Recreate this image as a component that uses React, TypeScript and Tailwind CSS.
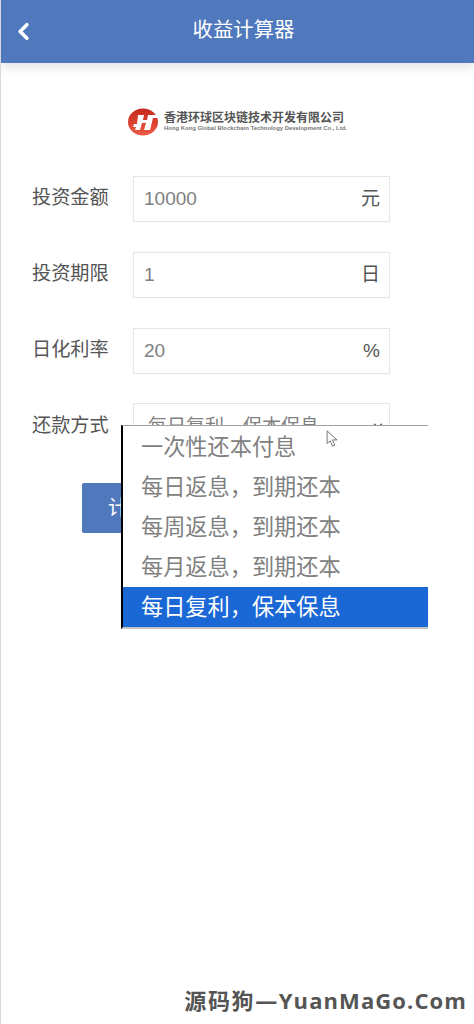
import React from 'react';
import { ChevronDown, ChevronLeft } from 'lucide-react';

const FONT = 'font-["Liberation_Sans","Noto_Sans_CJK_SC",sans-serif]';

const options = ['一次性还本付息', '每日返息，到期还本', '每周返息，到期还本', '每月返息，到期还本', '每日复利，保本保息'];

const Field = ({ label, value, unit }: { label: string; value: string; unit: string }) => (
  <div className="flex h-[46px] items-center">
    <label className="w-[101px] shrink-0 pb-[2px] text-[19.2px] leading-none text-[#555]">{label}</label>
    <div className="flex h-full w-[257px] items-center justify-between border border-[#e6e6e6] pb-[2px] pl-[10px] pr-[9px] shadow-[0_0_1px_#eee]">
      <span className="text-[19px] leading-none text-[#808080]">{value}</span>
      <span className="text-[19px] leading-none text-[#555]">{unit}</span>
    </div>
  </div>
);

const Logo = () => (
  <div className="flex h-[28px] items-center gap-[5px]">
    <svg width="31" height="28" viewBox="0 0 31 28">
      <defs>
        <linearGradient id="logoRed" x1="0" y1="0" x2="0" y2="1">
          <stop offset="0" stopColor="#c5281c" />
          <stop offset="1" stopColor="#ee5a45" />
        </linearGradient>
      </defs>
      <ellipse cx="15" cy="14" rx="15" ry="13.5" fill="url(#logoRed)" />
      <path d="M10 7h6l-1 5h4l1-5h11l-1 3h-5l-3 12h-6l2-7h-4l-2 7H7l1-3H5l1-3h3z" fill="#fff" />
    </svg>
    <div className="flex flex-col items-start">
      <span className="text-[12px] font-bold leading-[13px] whitespace-nowrap text-[#555]">香港环球区块链技术开发有限公司</span>
      <span className="text-[5.9px] font-bold leading-[7px] whitespace-nowrap text-[#777]">Hong Kong Global Blockchain Technology Development Co., Ltd.</span>
    </div>
  </div>
);

export default function App() {
  return (
    <div className={`${FONT} flex h-[1024px] flex-col overflow-hidden border-l border-[#d9d9d9] bg-white`}>
      <header className="relative flex h-[63px] shrink-0 items-center justify-center bg-[#4f78bd] pb-[2px] pl-[12px] shadow-[0_4px_12px_rgba(0,0,0,0.12)]">
        <ChevronLeft className="absolute left-[9px] top-[18px] h-[27px] w-[27px] text-white" strokeWidth={3.2} />
        <h1 className="text-[20.4px] font-normal text-white">收益计算器</h1>
      </header>

      <div className="mt-[45px] flex justify-center">
        <Logo />
      </div>

      <div className="mt-[40px] flex flex-col gap-[30px] pl-[31px]">
        <Field label="投资金额" value="10000" unit="元" />
        <Field label="投资期限" value="1" unit="日" />
        <Field label="日化利率" value="20" unit="%" />
      </div>

      <div className="relative mt-[29px] pl-[31px]">
        <div className="flex h-[46px] items-center">
          <label className="w-[101px] shrink-0 pb-[1px] text-[19.2px] leading-none text-[#555]">还款方式</label>
          <div className="flex h-full w-[257px] items-center justify-between border border-[#e6e6e6] pl-[14px] pr-[4px]">
            <span className="text-[19px] leading-none text-[#808080]">每日复利，保本保息</span>
            <ChevronDown className="h-[14px] w-[14px] text-[#555]" strokeWidth={2.5} />
          </div>
        </div>

        <button className="ml-[50px] mt-[34px] block h-[50px] w-[310px] rounded-[2px] bg-[#4f78bd] pl-[26px] text-left text-[20px] text-white">
          计算
        </button>

        {/* native select popup sits over the field and the button */}
        <ul className="absolute left-[120px] top-[22px] w-[307px] border-t border-b-2 border-l-2 border-t-[#a0a0a0] border-b-[#c4c4c4] border-l-black bg-white">
          {options.map((opt, i) => (
            <li
              key={opt}
              className={
                i === options.length - 1
                  ? 'flex h-[40px] items-center bg-[#1a67d6] pt-[2px] pl-[18px] text-[22.2px] leading-none text-white'
                  : 'flex h-[40.25px] items-center pt-[3px] pl-[18px] text-[22.2px] leading-none text-[#808080]'
              }
            >
              {opt}
            </li>
          ))}
        </ul>

        <svg className="absolute left-[325px] top-[27px]" width="13" height="18" viewBox="0 0 14 20">
          <path d="M1 1v14l3.5-3 2.5 6 2.5-1-2.5-6H12z" fill="#fff" stroke="#666" strokeWidth="1" />
        </svg>
      </div>

      <div className='mt-auto pb-[9px] pr-[7px] text-right font-["Open_Sans","Noto_Sans_CJK_SC",sans-serif] text-[22px] leading-[30px] font-bold text-[#555]'>
        <span className="tracking-[1.6px]">源码狗—</span>
        <span className="tracking-[1.1px]">YuanMaGo.Com</span>
      </div>
    </div>
  );
}
